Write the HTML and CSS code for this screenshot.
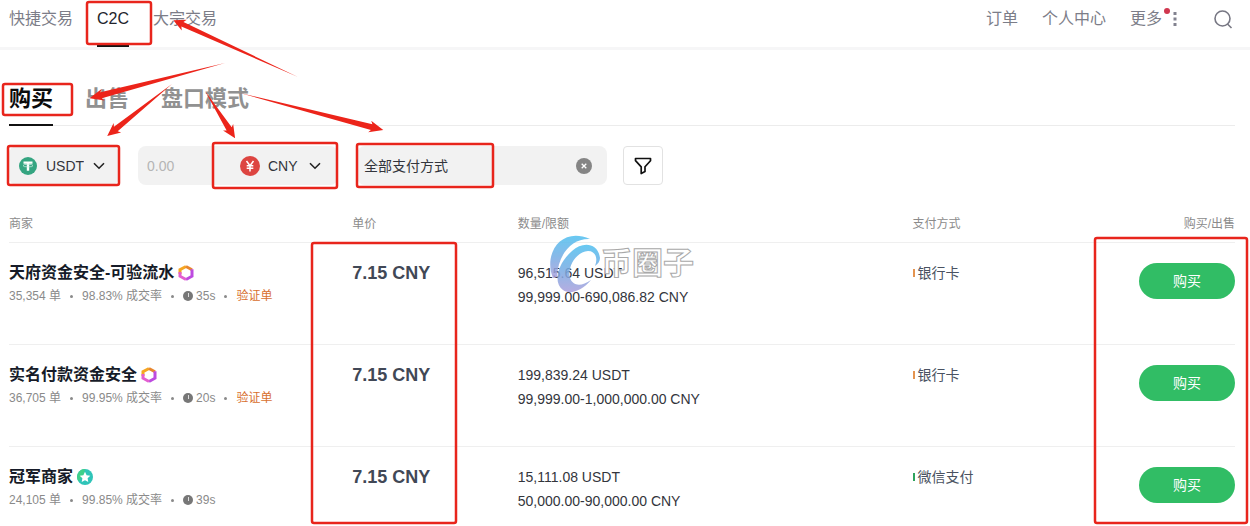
FILE: index.html
```html
<!DOCTYPE html>
<html lang="zh-CN">
<head>
	<meta charset="utf-8">
	<title>C2C</title>
	<link rel="stylesheet" href="styles.css">
</head>
<body>
<div class="page">
	<header class="topbar">
		<nav class="nav">
			<a href="#">快捷交易</a>
			<a href="#" class="active">C2C</a>
			<a href="#">大宗交易</a>
		</nav>
		<nav class="nav">
			<a href="#">订单</a>
			<a href="#">个人中心</a>
			<a href="#" class="more">更多
				<svg width="4" height="16" viewBox="0 0 4 16" fill="#82828f"><path d="M0.5 1h3v3h-3zM0.5 6.500h3v3h-3zM0.500 12h3v3h-3z"/></svg>
				<span class="dot"></span>
			</a>
			<button class="search" aria-label="搜索">
				<svg width="20" height="20" viewBox="0 0 20 20" fill="none" stroke="#777783" stroke-width="1.6"><circle cx="9.500" cy="9.500" r="7.500"/><path d="M14.500 15l4 4"/></svg>
			</button>
		</nav>
	</header>

	<div class="tabs">
		<a href="#" class="active">购买</a>
		<a href="#">出售</a>
		<a href="#">盘口模式</a>
	</div>

	<form class="filters">
		<label class="field coin">
			<svg width="18" height="18" viewBox="0 0 18 18"><circle cx="9" cy="9" r="9" fill="#35a581"/><path d="M4.500 4.500h9v2.300h-3.300v7H7.800v-7H4.500z" fill="#fff"/><ellipse cx="9" cy="8.600" rx="5" ry="1.300" fill="none" stroke="#d5efe6" stroke-width=".7"/></svg>
			<select aria-label="币种"><option>USDT</option></select>
			<svg class="arrow" width="12" height="8" viewBox="0 0 12 8"><path d="M1 1.200l5 5 5-5"/></svg>
		</label>
		<div class="field amount">
			<input type="text" placeholder="0.00" aria-label="金额">
			<label class="currency">
				<svg width="20" height="20" viewBox="0 0 20 20"><circle cx="10" cy="10" r="10" fill="#dd4541"/><path d="M6.500 5l3.500 4.700L13.500 5M10 9.500V15.500M6.700 9.700h6.600M6.700 12.300h6.600" fill="none" stroke="#fff" stroke-width="1.500"/></svg>
				<select aria-label="法币"><option>CNY</option></select>
				<svg class="arrow" width="12" height="8" viewBox="0 0 12 8"><path d="M1 1.200l5 5 5-5"/></svg>
			</label>
		</div>
		<div class="field payment">
			<select aria-label="支付方式"><option>全部支付方式</option></select>
			<button type="button" class="clear" aria-label="清除">
				<svg width="16" height="16" viewBox="0 0 16 16"><circle cx="8" cy="8" r="8" fill="#858585"/><path d="M5.700 5.700l4.600 4.600M10.300 5.700l-4.600 4.600" stroke="#fff" stroke-width="1.300"/></svg>
			</button>
		</div>
		<button type="button" class="filter" aria-label="筛选">
			<svg width="18" height="18" viewBox="0 0 18 18" fill="none" stroke="#111" stroke-width="1.700" stroke-linejoin="round"><path d="M1.500 1.500h15v2.200L11 9.800v4.700L7.200 16.500V9.800L1.500 3.700z"/></svg>
		</button>
	</form>

	<table class="offers">
		<thead>
			<tr>
				<th class="c-merchant">商家</th>
				<th class="c-price">单价</th>
				<th class="c-amount">数量/限额</th>
				<th>支付方式</th>
				<th class="c-action">购买/出售</th>
			</tr>
		</thead>
		<tbody>
			<tr>
				<td>
					<div class="name">天府资金安全-可验流水
						<svg width="16" height="16" viewBox="0 0 16 16" fill="none" stroke-width="3"><path d="M2 9V4.700L8 1.500" stroke="#f5a623"/><path d="M8 1.500l6 3.200" stroke="#e8862e"/><path d="M14 4.200v7L8 14.500" stroke="#bd4be0"/><path d="M8 14.500l-6-3.300V7" stroke="#e35fd0"/></svg>
					</div>
					<div class="stats"><span>35,354 单</span><i></i><span>98.83% 成交率</span><i></i><span class="time">35s</span><i></i><span class="verify">验证单</span></div>
				</td>
				<td class="price">7.15 CNY</td>
				<td>96,515.64 USDT<br>99,999.00-690,086.82 CNY</td>
				<td><span class="pay bank">银行卡</span></td>
				<td class="c-action"><button class="buy">购买</button></td>
			</tr>
			<tr>
				<td>
					<div class="name">实名付款资金安全
						<svg width="16" height="16" viewBox="0 0 16 16" fill="none" stroke-width="3"><path d="M2 9V4.700L8 1.500" stroke="#f5a623"/><path d="M8 1.500l6 3.200" stroke="#e8862e"/><path d="M14 4.200v7L8 14.500" stroke="#bd4be0"/><path d="M8 14.500l-6-3.300V7" stroke="#e35fd0"/></svg>
					</div>
					<div class="stats"><span>36,705 单</span><i></i><span>99.95% 成交率</span><i></i><span class="time">20s</span><i></i><span class="verify">验证单</span></div>
				</td>
				<td class="price">7.15 CNY</td>
				<td>199,839.24 USDT<br>99,999.00-1,000,000.00 CNY</td>
				<td><span class="pay bank">银行卡</span></td>
				<td class="c-action"><button class="buy">购买</button></td>
			</tr>
			<tr>
				<td>
					<div class="name">冠军商家
						<svg width="16" height="16" viewBox="0 0 16 16"><circle cx="8" cy="8" r="8" fill="#2fc4b8"/><path d="M1.500 12.500A8 8 0 0 1 8 0l-1 5z" fill="#3fd08a"/><path d="M8 2.800l1.600 3.400 3.700.5-2.700 2.600.7 3.700L8 11.200 4.700 13l.7-3.700L2.700 6.700l3.700-.5z" fill="#fff"/></svg>
					</div>
					<div class="stats"><span>24,105 单</span><i></i><span>99.85% 成交率</span><i></i><span class="time">39s</span></div>
				</td>
				<td class="price">7.15 CNY</td>
				<td>15,111.08 USDT<br>50,000.00-90,000.00 CNY</td>
				<td><span class="pay wechat">微信支付</span></td>
				<td class="c-action"><button class="buy">购买</button></td>
			</tr>
		</tbody>
	</table>

	<!-- watermark -->
	<div class="watermark">
		<svg width="52" height="60" viewBox="0 0 52 60">
			<defs>
				<linearGradient id="wm" x1="0" y1="0" x2="0" y2="1"><stop offset="0" stop-color="#4fc0f0"/><stop offset=".5" stop-color="#74ace4"/><stop offset="1" stop-color="#aaa0dc"/></linearGradient>
			</defs>
			<path d="M4 44C-6 20 12-8 41 5 23 4 9 20 8 43z" fill="url(#wm)"/>
			<path d="M51 24C49 9 34 7 23 17 8 30 4 49 14 56c7 5 19 1 28-10-10 7-18 6-21-2C18 33 27 18 39 17c8 0 10 8 7 15 3-2 5-5 5-8z" fill="url(#wm)"/>
		</svg>
		<span>币圈子</span>
	</div>

	<!-- guide marks -->
	<svg class="marks" width="1250" height="526" viewBox="0 0 1250 526">
		<g fill="none" stroke="#e8251c" stroke-width="2.500">
			<rect x="87" y="2" width="64" height="42" rx="2"/>
			<rect x="3" y="84" width="69" height="31" rx="2"/>
			<rect x="8" y="146" width="111" height="39" rx="2"/>
			<rect x="213" y="143" width="124" height="45" rx="2"/>
			<rect x="357" y="144" width="136" height="43" rx="2"/>
			<rect x="312" y="243" width="144" height="280" rx="2"/>
			<rect x="1095" y="238" width="152" height="285" rx="2"/>
		</g>
		<g fill="#ec241a">
			<path transform="translate(298 77) rotate(204.500)" d="M0 0L127-2.500 125-6 137 0 125 6 127 2.500z"/>
			<path transform="translate(225 63) rotate(165.400)" d="M0 0L128-3 126-6 140 0 126 6 128 3z"/>
			<path transform="translate(172 84) rotate(141.300)" d="M0 0L72-3 70-6 83 0 70 6 72 3z"/>
			<path transform="translate(205 91) rotate(57.500)" d="M0 0L45-3 43-6 56 0 43 6 45 3z"/>
			<path transform="translate(240 93) rotate(14.500)" d="M0 0L136-3 134-6 148 0 134 6 136 3z"/>
		</g>
	</svg>
</div>
</body>
</html>
```
FILE: styles.css
```css
* {
	box-sizing: border-box;
}

body {
	margin: 0;
	background: #fff;
	color: #33353c;
	font-family: "Liberation Sans", "Noto Sans CJK SC", sans-serif;
	font-size: 14px;
}

a {
	color: inherit;
	text-decoration: none;
}

button, input, select {
	font: inherit;
	color: inherit;
	border: 0;
	padding: 0;
	margin: 0;
	background: none;
}

select {
	appearance: none;
	outline: none;
}

svg {
	display: block;
}

.page {
	position: relative;
	overflow: hidden;
}

/* top bar */
.topbar {
	display: flex;
	justify-content: space-between;
	height: 50px;
	padding: 0 17px 0 9px;
	border-bottom: 3px solid #f6f6f7;
}

.nav {
	display: flex;
	gap: 24px;
	height: 47px;
	font-size: 16px;
	line-height: 38px;
	color: #7c7d88;
}

.nav .active {
	color: #22242c;
	border-bottom: 3px solid #111;
}

.more {
	position: relative;
	display: flex;
	align-items: center;
	gap: 11px;
	height: 38px;
	margin-right: 12px;
}

.dot {
	position: absolute;
	left: 34px;
	top: 8px;
	width: 6px;
	height: 6px;
	border-radius: 50%;
	background: #d0374f;
}

.search {
	height: 38px;
}

/* buy / sell tabs */
.tabs {
	display: flex;
	gap: 32px;
	height: 76px;
	padding: 30px 0 0;
	margin: 0 15px 0 9px;
	border-bottom: 1px solid #ececec;
	font-size: 22px;
	font-weight: 700;
	line-height: 38px;
	color: #919191;
}

.tabs .active {
	height: 46px;
	color: #0b0b0b;
	border-bottom: 2px solid #111;
}

/* filters */
.filters {
	display: flex;
	gap: 19px;
	padding: 20px 9px 0;
}

.field {
	display: flex;
	align-items: center;
	height: 39px;
	border-radius: 8px;
	background: #f2f2f2;
}

.coin {
	width: 110px;
	padding-left: 10px;
	gap: 9px;
}

.coin select {
	width: 38px;
}

.arrow {
	fill: none;
	stroke: #222;
	stroke-width: 1.6px;
}

.amount {
	width: 200px;
	padding: 0 17px 0 9px;
	justify-content: space-between;
}

.amount input {
	width: 70px;
}

.amount input::placeholder {
	color: #b5b5b5;
}

.currency {
	display: flex;
	align-items: center;
	gap: 8px;
}

.currency select {
	width: 33px;
}

.payment {
	width: 250px;
	padding: 0 15px 0 7px;
	justify-content: space-between;
}

.payment select {
	width: 120px;
}

.filter {
	display: flex;
	align-items: center;
	justify-content: center;
	width: 40px;
	height: 39px;
	border: 1px solid #e2e2e2;
	border-radius: 4px;
	margin-left: -3px;
}

/* offers */
.offers {
	width: calc(100% - 24px);
	margin: 20px 15px 0 9px;
	border-collapse: collapse;
	table-layout: fixed;
}

.offers th {
	height: 37px;
	padding: 2px 0 0;
	font-size: 12px;
	font-weight: 400;
	line-height: 35px;
	text-align: left;
	color: #8b8b8b;
}

.offers tr {
	border-bottom: 1px solid #efefef;
}

.offers tbody tr:last-child {
	border-bottom: 0;
}

.offers td {
	padding: 18px 0 35px;
	line-height: 24px;
	vertical-align: top;
}

.offers tr:last-child td {
	padding-bottom: 13px;
}

.offers .c-merchant {
	width: 28%;
}

.offers .c-price {
	width: 13.5%;
}

.offers .c-amount {
	width: 32.2%;
}

.offers .c-action {
	text-align: right;
}

.offers .price {
	font-size: 18px;
	font-weight: 700;
	color: #414856;
}

.name {
	display: flex;
	align-items: center;
	gap: 4px;
	font-size: 16px;
	font-weight: 700;
	color: #161b28;
}

.stats {
	display: flex;
	align-items: center;
	gap: 9px;
	font-size: 12px;
	line-height: 22px;
	color: #8a8a8a;
}

.stats i {
	width: 3px;
	height: 3px;
	border-radius: 50%;
	background: #8a8a8a;
}

.time {
	display: flex;
	align-items: center;
	gap: 3px;
}

.time::before {
	content: "";
	width: 10px;
	height: 10px;
	border-radius: 50%;
	background: linear-gradient(#ddd, #ddd) 5px 2px / 1px 4px no-repeat, #777;
}

.verify {
	color: #d8702f;
}

.pay {
	display: flex;
	align-items: center;
	gap: 3px;
	color: #4a5261;
}

.pay::before {
	content: "";
	width: 2px;
	height: 8px;
}

.bank::before {
	background: #e5944f;
}

.wechat::before {
	background: #2fa35d;
}

.buy {
	width: 96px;
	height: 36px;
	margin-top: 2px;
	border-radius: 18px;
	background: #31bd65;
	color: #fff;
}

/* overlays */
.watermark {
	position: absolute;
	left: 549px;
	top: 234px;
	display: flex;
	align-items: center;
	pointer-events: none;
}

.watermark svg {
	opacity: .85;
}

.watermark span {
	font-size: 31px;
	font-weight: 700;
	line-height: 60px;
	color: #fff;
	-webkit-text-stroke: 1px #a9a9a9;
}

.marks {
	position: absolute;
	left: 0;
	top: 0;
	pointer-events: none;
}
```
